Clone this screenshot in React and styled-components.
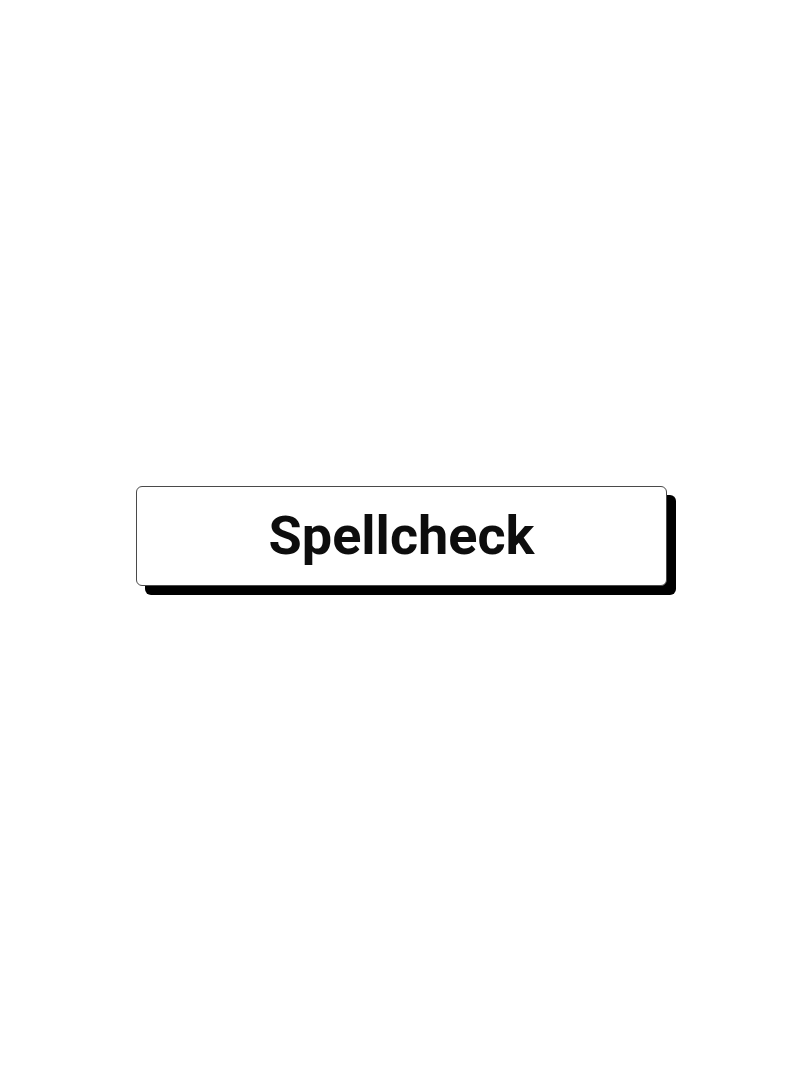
import React from "react";
import styled, { createGlobalStyle } from "styled-components";

const GlobalStyle = createGlobalStyle`
  html, body {
    margin: 0;
    padding: 0;
    background: #ffffff;
  }
`;

const Page = styled.main`
  width: 810px;
  height: 1080px;
  display: flex;
  justify-content: center;
  align-items: center;
  padding-right: 7px;
  padding-bottom: 8px;
  box-sizing: border-box;
`;

const Button = styled.button`
  width: 531px;
  height: 100px;
  background: #ffffff;
  border: 1px solid #4a4a4a;
  border-radius: 6px;
  box-shadow: 9px 9px 0 #000000;
  font-family: Roboto, "Liberation Sans", sans-serif;
  font-weight: 700;
  font-size: 54px;
  line-height: 1;
  color: #0d0d0d;
  cursor: pointer;
  padding: 0;
`;

const App = () => {
  return (
    <>
      <GlobalStyle />
      <Page>
        <Button>Spellcheck</Button>
      </Page>
    </>
  );
};

export default App;
